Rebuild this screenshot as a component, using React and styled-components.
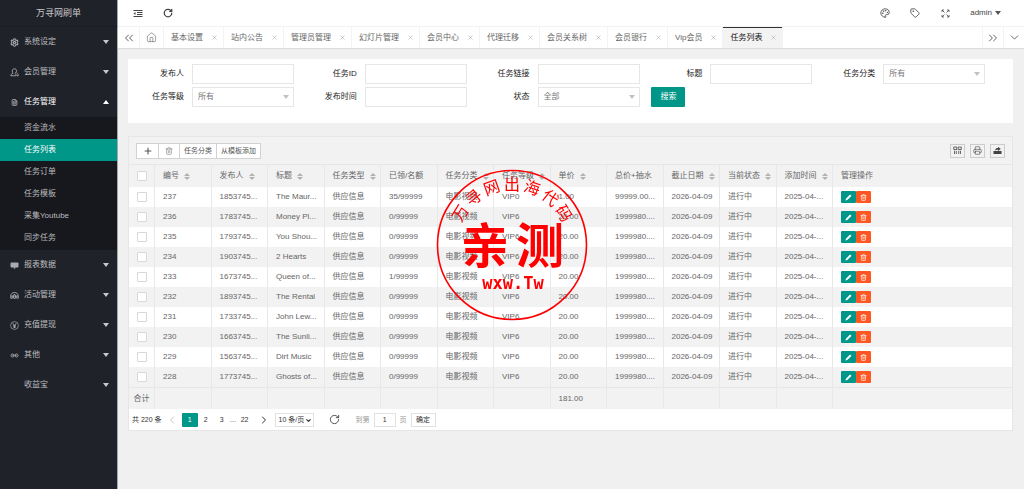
import { useState } from "react";
import styled, { createGlobalStyle } from "styled-components";
import {
  Settings, FileText, House, Tag, Palette, RotateCw, ChevronsLeft, ChevronsRight,
  ChevronDown, ChevronLeft, ChevronRight, X, Plus, Trash2, Printer,
} from "lucide-react";

const menuItems = [
  { label: "系统设定", icon: "gear" },
  { label: "会员管理", icon: "user" },
  {
    label: "任务管理",
    icon: "file",
    children: ["资金流水", "任务列表", "任务订单", "任务模板", "采集Youtube", "同步任务"],
  },
  { label: "报表数据", icon: "board" },
  { label: "活动管理", icon: "gift" },
  { label: "充值提现", icon: "yen" },
  { label: "其他", icon: "link" },
  { label: "收益宝" },
];

const tabs = [
  "基本设置", "站内公告", "管理员管理", "幻灯片管理", "会员中心",
  "代理迁移", "会员关系树", "会员银行", "Vip会员", "任务列表",
];

const columns = [
  { title: "编号", sort: true },
  { title: "发布人", sort: true },
  { title: "标题", sort: true },
  { title: "任务类型", sort: true },
  { title: "已领/名额" },
  { title: "任务分类", sort: true },
  { title: "任务等级", sort: true },
  { title: "单价", sort: true },
  { title: "总价+抽水" },
  { title: "截止日期", sort: true },
  { title: "当前状态", sort: true },
  { title: "添加时间", sort: true },
];

const tasks = [
  { id: 237, user: "1853745...", title: "The Maur...", quota: "35/99999", level: "VIP0", price: "1.00", total: "99999.00..." },
  { id: 236, user: "1783745...", title: "Money Pl...", quota: "0/99999" },
  { id: 235, user: "1793745...", title: "You Shou...", quota: "0/99999" },
  { id: 234, user: "1903745...", title: "2 Hearts", quota: "0/99999" },
  { id: 233, user: "1673745...", title: "Queen of...", quota: "1/99999" },
  { id: 232, user: "1893745...", title: "The Rental", quota: "0/99999" },
  { id: 231, user: "1733745...", title: "John Lew...", quota: "0/99999" },
  { id: 230, user: "1663745...", title: "The Sunli...", quota: "0/99999" },
  { id: 229, user: "1563745...", title: "Dirt Music", quota: "0/99999" },
  { id: 228, user: "1773745...", title: "Ghosts of...", quota: "0/99999" },
];

function MenuIcon({ name }) {
  if (name === "gear") return <Settings size={9} strokeWidth={2.8} />;
  if (name === "file") return <FileText size={7} strokeWidth={3} />;
  return (
    <svg width="9" height="9" viewBox="0 0 18 18" fill="none" stroke="currentColor" strokeWidth="1.8">
      {name === "user" && (
        <path d="M9 1.500c-3 0-4.500 2-4.500 4.500 0 2 1 3.500 1.500 4.500-2.500 1-4.500 2-4.500 5h11c0-3-2-4-2.500-5 1.500-1 3-2.500 3-4.500 0-2.500-1.500-4.500-4-4.500zM13 9.500c2 .5 3.500 2.500 3.500 6H14" />
      )}
      {name === "board" && (
        <g fill="currentColor" stroke="none">
          <path d="M3 3h12a2 2 0 0 1 2 2v6a2 2 0 0 1-2 2H3a2 2 0 0 1-2-2V5a2 2 0 0 1 2-2z" />
          <path d="M6 13h6l-3 3z" />
        </g>
      )}
      {name === "gift" && (
        <path d="M1.500 14.500V9C1.500 5.500 5 3 9 3s7.500 2.500 7.500 6v5.500h-3V10M1.500 14.500h3V10M7 14.500V9.500L9 6l2 3.500v5zM1.500 10h15" />
      )}
      {name === "yen" && (
        <>
          <circle cx="9" cy="9" r="7.800" strokeWidth="1.400" />
          <path d="M5.500 4.500L9 9l3.500-4.500M9 9v5M6 9.500h6M6 12h6" />
        </>
      )}
      {name === "link" && (
        <>
          <circle cx="5" cy="9" r="3" />
          <circle cx="13" cy="9" r="3" />
          <path d="M5 9h2.500l1.500-1.500L10.500 9H13" />
        </>
      )}
    </svg>
  );
}

function ShrinkIcon() {
  return (
    <svg width="10" height="9" viewBox="0 0 20 18" fill="none" stroke="currentColor" strokeWidth="2">
      <path d="M1 3h18M8 7h11M8 11h11M1 15h18" />
      <path d="M5 6L1 9l4 3z" fill="currentColor" stroke="none" />
    </svg>
  );
}

function FullscreenIcon() {
  return (
    <svg width="9" height="9" viewBox="0 0 18 18" fill="none" stroke="currentColor" strokeWidth="1.500">
      <path d="M2 6V2h4M2 2l5 5M12 2h4v4M16 2l-5 5M2 12v4h4M2 16l5-5M16 12v4h-4M16 16l-5-5" />
    </svg>
  );
}

function ColumnsIcon() {
  return (
    <svg width="9" height="9" viewBox="0 0 18 18" fill="none" stroke="currentColor" strokeWidth="1.600">
      <path d="M1.500 2h6v5h-6zM10.500 2h6v5h-6zM3 9.500V16M6.500 9.500V16M11.500 9.500V16M15 9.500V16" />
    </svg>
  );
}

function ExportIcon() {
  return (
    <svg width="9" height="9" viewBox="0 0 18 18" fill="currentColor">
      <path d="M1 10h16v6H1z" />
      <path d="M4 9C5 5 7 4 10 4V1.500L15.500 6 10 10V7.500C7 7.500 5.500 8 4 9z" />
    </svg>
  );
}

function PencilIcon() {
  return (
    <svg width="7" height="7" viewBox="0 0 14 14" fill="currentColor">
      <path d="M1 13l.8-3.600L9.500 1.700a1.200 1.200 0 0 1 1.700 0l1.100 1.100a1.200 1.200 0 0 1 0 1.700L4.600 12.200z" />
    </svg>
  );
}

function Stamp() {
  return (
    <StampSvg viewBox="0 0 154 154" aria-hidden="true">
      <circle cx="77" cy="77" r="74.500" fill="none" stroke="#f00" strokeWidth="1.600" />
      <g fontSize="16" textAnchor="middle">
        {"万寻网出海代码".split("").map((char, i) => (
          <text key={char} x="77" y="22" transform={`rotate(${(i - 3) * 19.500} 77 77)`}>{char}</text>
        ))}
      </g>
      <text x="50" y="95" fontSize="48" fontWeight="700" textAnchor="middle">亲</text>
      <text x="105" y="95" fontSize="48" fontWeight="700" textAnchor="middle">测</text>
      <StampUrl x="78" y="121" textAnchor="middle">wxw.Tw</StampUrl>
    </StampSvg>
  );
}

export default function App() {
  const [activeTab, setActiveTab] = useState("任务列表");

  return (
    <Page>
      <GlobalStyle />
      <Sidebar>
        <Brand>万寻网刷单</Brand>
        <nav>
          {menuItems.map((item) => (
            <div key={item.label}>
              <MenuLink href="#" $open={!!item.children}>
                <MenuIconBox>{item.icon && <MenuIcon name={item.icon} />}</MenuIconBox>
                <span>{item.label}</span>
                <Caret $up={!!item.children} />
              </MenuLink>
              {item.children && (
                <SubMenu>
                  {item.children.map((child) => (
                    <SubLink key={child} href="#" $active={child === "任务列表"}>{child}</SubLink>
                  ))}
                </SubMenu>
              )}
            </div>
          ))}
        </nav>
      </Sidebar>

      <Main>
        <Header>
          <HeaderGroup>
            <IconButton aria-label="菜单"><ShrinkIcon /></IconButton>
            <IconButton aria-label="刷新"><RotateCw size={10} strokeWidth={3} /></IconButton>
          </HeaderGroup>
          <HeaderGroup>
            <IconButton aria-label="主题"><Palette size={10} /></IconButton>
            <IconButton aria-label="便签"><Tag size={10} /></IconButton>
            <IconButton aria-label="全屏"><FullscreenIcon /></IconButton>
            <UserButton>admin <Caret $dark /></UserButton>
          </HeaderGroup>
        </Header>

        <TabBar>
          <TabControl aria-label="向左"><ChevronsLeft size={14} strokeWidth={1.6} /></TabControl>
          <TabControl aria-label="首页" $wide $line><House size={11} strokeWidth={1.2} /></TabControl>
          <TabList>
            {tabs.map((tab) => (
              <Tab key={tab} $active={tab === activeTab} onClick={() => setActiveTab(tab)}>
                {tab}
                <X size={7} color="#aaa" strokeWidth={2} />
              </Tab>
            ))}
          </TabList>
          <TabControl aria-label="向右" $line><ChevronsRight size={14} strokeWidth={1.6} /></TabControl>
          <TabControl aria-label="更多" $line><ChevronDown size={13} strokeWidth={1.6} /></TabControl>
        </TabBar>

        <Content>
          <SearchForm onSubmit={(e) => e.preventDefault()}>
            <TextField id="user" label="发布人" />
            <TextField id="taskId" label="任务ID" />
            <TextField id="link" label="任务链接" />
            <TextField id="title" label="标题" />
            <SelectField id="category" label="任务分类" text="所有" />
            <SelectField id="level" label="任务等级" text="所有" />
            <TextField id="time" label="发布时间" />
            <SelectField id="status" label="状态" text="全部" />
            <SearchButton type="submit">搜索</SearchButton>
          </SearchForm>

          <TableCard>
            <Toolbar>
              <ButtonGroup>
                <ToolButton aria-label="添加"><Plus size={10} strokeWidth={2.6} /></ToolButton>
                <ToolButton aria-label="删除"><Trash2 size={8} strokeWidth={2} color="#888" /></ToolButton>
                <ToolButton>任务分类</ToolButton>
                <ToolButton>从模板添加</ToolButton>
              </ButtonGroup>
              <ToolIcons>
                <ToolIcon aria-label="筛选列"><ColumnsIcon /></ToolIcon>
                <ToolIcon aria-label="打印"><Printer size={9} strokeWidth={1.6} /></ToolIcon>
                <ToolIcon aria-label="导出"><ExportIcon /></ToolIcon>
              </ToolIcons>
            </Toolbar>

            <Table>
              <colgroup>
                <CheckCol />
                {columns.map((col) => <DataCol key={col.title} />)}
                <col />
              </colgroup>
              <thead>
                <tr>
                  <CheckHead><Checkbox type="checkbox" aria-label="全选" /></CheckHead>
                  {columns.map((col) => (
                    <th key={col.title}>
                      <HeadCell>{col.title}{col.sort && <Sort />}</HeadCell>
                    </th>
                  ))}
                  <th>管理操作</th>
                </tr>
              </thead>
              <tbody>
                {tasks.map((task) => (
                  <tr key={task.id}>
                    <CheckCell><Checkbox type="checkbox" aria-label={`选择 ${task.id}`} /></CheckCell>
                    <td>{task.id}</td>
                    <td>{task.user}</td>
                    <td>{task.title}</td>
                    <td>供应信息</td>
                    <td>{task.quota}</td>
                    <td>电影视频</td>
                    <td>{task.level || "VIP6"}</td>
                    <td>{task.price || "20.00"}</td>
                    <td>{task.total || "1999980...."}</td>
                    <td>2026-04-09</td>
                    <td>进行中</td>
                    <td>2025-04-...</td>
                    <td>
                      <Actions>
                        <ActionButton aria-label="编辑" $color="#009688"><PencilIcon /></ActionButton>
                        <ActionButton aria-label="删除" $color="#ff5722"><Trash2 size={7} strokeWidth={2.2} /></ActionButton>
                      </Actions>
                    </td>
                  </tr>
                ))}
              </tbody>
              <tfoot>
                <tr>
                  <CheckCell>合计</CheckCell>
                  {columns.map((col) => <td key={col.title}>{col.title === "单价" ? "181.00" : ""}</td>)}
                  <td />
                </tr>
              </tfoot>
            </Table>

            <Pager>
              <span>共 220 条</span>
              <PageButton aria-label="上一页" $width="20px" $muted><ChevronLeft size={12} strokeWidth={1.8} /></PageButton>
              <PageButton $active>1</PageButton>
              <PageButton>2</PageButton>
              <PageButton>3</PageButton>
              <span>…</span>
              <PageButton>22</PageButton>
              <PageButton $width="22px" aria-label="下一页"><ChevronRight size={12} strokeWidth={2} /></PageButton>
              <PageSizeBox>
                <PageSize aria-label="每页条数"><option>10 条/页</option></PageSize>
                <ChevronDown size={7} strokeWidth={4} />
              </PageSizeBox>
              <PageButton $width="42px" aria-label="刷新"><RotateCw size={11} strokeWidth={1.8} /></PageButton>
              <JumpLabel>
                到第
                <JumpInput defaultValue="1" />
                页
              </JumpLabel>
              <JumpButton>确定</JumpButton>
            </Pager>
          </TableCard>
        </Content>
      </Main>
      <Stamp />
    </Page>
  );
}

function TextField({ id, label }) {
  return (
    <Field>
      <Label htmlFor={id}>{label}</Label>
      <Input id={id} type="text" />
    </Field>
  );
}

function SelectField({ id, label, text }) {
  return (
    <Field>
      <Label htmlFor={id}>{label}</Label>
      <SelectBox>
        <Select id={id}><option>{text}</option></Select>
      </SelectBox>
    </Field>
  );
}

const GlobalStyle = createGlobalStyle`
  * {
    box-sizing: border-box;
  }
  body {
    margin: 0;
    background: #f0f0f0;
    color: #333;
    font-family: "Liberation Sans", "Noto Sans CJK SC", sans-serif;
    font-size: 8px;
    line-height: 12px;
  }
  a {
    text-decoration: none;
  }
  button, input, select {
    font: inherit;
    color: inherit;
    margin: 0;
  }
  button {
    display: inline-flex;
    align-items: center;
    justify-content: center;
    padding: 0;
    border: none;
    background: none;
    cursor: pointer;
  }
`;

const Page = styled.div`
  display: grid;
  grid-template-columns: 118px minmax(0, 1fr);
  min-height: 100vh;
`;

const Sidebar = styled.aside`
  background: #20222a;
  border-right: 1px solid #a5a6a9;
`;

const Brand = styled.div`
  height: 27px;
  line-height: 27px;
  text-align: center;
  font-size: 9px;
  color: #c6c7c9;
  border-bottom: 1px solid #1b1d24;
`;

const MenuLink = styled.a`
  display: flex;
  align-items: center;
  height: 30px;
  padding: 0 8px 0 10px;
  color: ${({ $open }) => ($open ? "#fff" : "#bcbdbf")};
`;

const MenuIconBox = styled.span`
  display: flex;
  align-items: center;
  justify-content: center;
  width: 9px;
  margin-right: 5px;
  color: #a9aaad;
`;

const Caret = styled.i`
  margin-left: ${({ $dark }) => ($dark ? "3px" : "auto")};
  border: 3px solid transparent;
  border-top: 4px solid ${({ $dark }) => ($dark ? "#555" : "#c8c9cb")};
  border-bottom: none;
  ${({ $up }) => $up && `
    border-top: none;
    border-bottom: 4px solid #fff;
  `}
`;

const SubMenu = styled.div`
  padding-bottom: 1px;
  background: #17181e;
`;

const SubLink = styled.a`
  display: block;
  padding: 5px 0 5px 24px;
  color: ${({ $active }) => ($active ? "#fff" : "#b9babc")};
  background: ${({ $active }) => ($active ? "#009688" : "transparent")};
`;

const Main = styled.main`
  min-width: 0;
`;

const Header = styled.header`
  display: flex;
  justify-content: space-between;
  height: 27px;
  padding: 0 13px 0 5px;
  background: #fff;
  border-bottom: 1px solid #f3f3f3;
`;

const HeaderGroup = styled.div`
  display: flex;
  color: #444;
`;

const IconButton = styled.button`
  width: 30px;
`;

const UserButton = styled.button`
  padding: 0 10px;
`;

const TabBar = styled.div`
  display: flex;
  height: 21px;
  background: #fff;
  box-shadow: 0 1px 1px #ddd;
  color: #555;
`;

const TabControl = styled.button`
  width: ${({ $wide }) => ($wide ? "24px" : "21px")};
  border-left: ${({ $line }) => ($line ? "1px solid #f3f3f3" : "none")};
`;

const TabList = styled.div`
  display: flex;
  flex: 1;
  min-width: 0;
  overflow: hidden;
  border-left: 1px solid #f3f3f3;
`;

const Tab = styled.button`
  gap: 8px;
  padding: 0 5px 0 7px;
  white-space: nowrap;
  border-right: 1px solid #f3f3f3;
  color: ${({ $active }) => ($active ? "#111" : "#666")};
  background: ${({ $active }) => ($active ? "#f3f3f3" : "transparent")};
  box-shadow: ${({ $active }) => ($active ? "inset 0 1px #333" : "none")};
`;

const Content = styled.div`
  padding: 11px 11px 0 10px;
`;

const SearchForm = styled.form`
  display: grid;
  grid-template-columns: repeat(5, 1fr);
  row-gap: 3px;
  padding: 5px 16px 16px 5px;
  background: #fff;
`;

const Field = styled.div`
  display: flex;
  align-items: center;
`;

const Label = styled.label`
  width: 59px;
  padding-right: 8px;
  text-align: right;
  color: #222;
`;

const Input = styled.input`
  width: 102px;
  height: 20px;
  padding: 0 5px;
  border: 1px solid #e6e6e6;
  background: #fff;
  outline: none;
`;

const SelectBox = styled.div`
  position: relative;
  &::after {
    content: "";
    position: absolute;
    top: 8px;
    right: 5px;
    border: 3px solid transparent;
    border-top: 4px solid #c2c2c2;
    border-bottom: none;
    pointer-events: none;
  }
`;

const Select = styled.select`
  display: block;
  appearance: none;
  width: 102px;
  height: 20px;
  padding: 0 5px;
  border: 1px solid #e6e6e6;
  border-radius: 0;
  background: #fff;
  color: #777;
`;

const SearchButton = styled.button`
  justify-self: start;
  width: 34px;
  height: 20px;
  border-radius: 1px;
  background: #009688;
  color: #fff;
`;

const TableCard = styled.section`
  margin-top: 13px;
  border: 1px solid #e6e6e6;
  background: #f2f2f2;
`;

const Toolbar = styled.div`
  display: flex;
  justify-content: space-between;
  align-items: center;
  height: 28px;
  padding: 0 7px;
  border-bottom: 1px solid #e6e6e6;
`;

const ButtonGroup = styled.div`
  display: flex;
  border: 1px solid #d2d2d2;
  background: #fff;
`;

const ToolButton = styled.button`
  min-width: 21px;
  height: 14px;
  padding: 0 4px;
  font-size: 7px;
  color: #555;
  & + & {
    border-left: 1px solid #d2d2d2;
  }
`;

const ToolIcons = styled.div`
  display: flex;
  gap: 5px;
`;

const ToolIcon = styled.button`
  width: 15px;
  height: 14px;
  border: 1px solid #ccc;
  color: #444;
`;

const Table = styled.table`
  width: 100%;
  table-layout: fixed;
  border-collapse: separate;
  border-spacing: 0;
  color: #666;
  th, td {
    height: 20px;
    padding: 0 0 0 8px;
    text-align: left;
    font-weight: 400;
    white-space: nowrap;
    border-right: 1px solid #e8e8e8;
  }
  th:last-child, td:last-child {
    border-right: none;
  }
  th {
    height: 22px;
  }
  tbody tr {
    background: #fff;
  }
  tbody tr:nth-child(even) {
    background: #f2f2f2;
  }
  tfoot td {
    height: 22px;
    border-top: 1px solid #e6e6e6;
  }
`;

const CheckCol = styled.col`
  width: 26px;
`;

const DataCol = styled.col`
  width: 6.4%;
`;

const CheckHead = styled.th`
  && {
    padding: 0;
    text-align: center;
  }
`;

const CheckCell = styled.td`
  && {
    padding: 0;
    text-align: center;
  }
`;

const Checkbox = styled.input`
  appearance: none;
  display: block;
  width: 10px;
  height: 10px;
  && {
    margin: 0 auto;
  }
  border: 1px solid #d8d8d8;
  border-radius: 1px;
  background: #fff;
  &:checked {
    background: #009688;
  }
`;

const HeadCell = styled.div`
  display: flex;
  align-items: center;
  gap: 5px;
`;

const Sort = styled.i`
  display: flex;
  flex-direction: column;
  gap: 1px;
  &::before, &::after {
    content: "";
    border: 3px solid transparent;
  }
  &::before {
    border-top: none;
    border-bottom-color: #b2b2b2;
  }
  &::after {
    border-bottom: none;
    border-top-color: #b2b2b2;
  }
`;

const Actions = styled.div`
  display: flex;
`;

const ActionButton = styled.button`
  width: 15px;
  height: 12px;
  border-radius: 1px;
  background: ${({ $color }) => $color};
  color: #fff;
`;

const Pager = styled.div`
  display: flex;
  align-items: center;
  height: 21px;
  padding: 0 3px;
  background: #fff;
  font-size: 7px;
`;

const PageButton = styled.button`
  width: ${({ $width }) => $width || "16px"};
  height: 14px;
  border-radius: 1px;
  color: ${({ $active, $muted }) => ($active ? "#fff" : $muted ? "#bbb" : "#333")};
  background: ${({ $active }) => ($active ? "#009688" : "transparent")};
`;

const PageSizeBox = styled.div`
  position: relative;
  svg {
    position: absolute;
    top: 4px;
    right: 2px;
    pointer-events: none;
  }
`;

const PageSize = styled.select`
  display: block;
  appearance: none;
  width: 39px;
  height: 14px;
  padding: 0 3px;
  border: 1px solid #e2e2e2;
  border-radius: 0;
  background: #fff;
`;

const JumpLabel = styled.label`
  display: flex;
  align-items: center;
  gap: 4px;
  color: #999;
`;

const JumpInput = styled.input`
  width: 22px;
  height: 14px;
  padding: 0;
  text-align: center;
  border: 1px solid #e2e2e2;
  color: #333;
`;

const JumpButton = styled.button`
  width: 25px;
  height: 14px;
  margin-left: 4px;
  border: 1px solid #e2e2e2;
`;

const StampSvg = styled.svg`
  position: fixed;
  inset: 0;
  margin: auto;
  width: 154px;
  height: 154px;
  fill: #f00;
  font-family: "Noto Sans CJK SC", sans-serif;
  pointer-events: none;
`;

const StampUrl = styled.text`
  font-family: "DejaVu Sans Mono", monospace;
  font-size: 17px;
  font-weight: 700;
`;
